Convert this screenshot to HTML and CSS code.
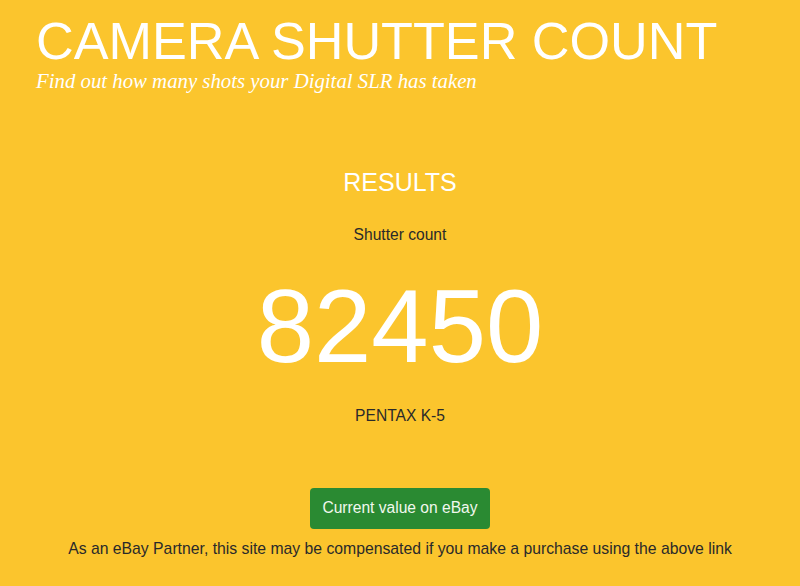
FILE: index.html
```html
<!DOCTYPE html>
<html>
<head>
<meta charset="utf-8">
<link rel="stylesheet" href="styles.css">
</head>
<body>
<header class="header">
  <h1 class="title">CAMERA SHUTTER COUNT</h1>
  <p class="tagline">Find out how many shots your Digital SLR has taken</p>
</header>
<main class="results">
  <h2 class="results-title">RESULTS</h2>
  <p class="label">Shutter count</p>
  <div class="count">82450</div>
  <p class="model">PENTAX K-5</p>
  <a class="ebay-btn" href="#">Current value on eBay</a>
  <p class="disclaimer">As an eBay Partner, this site may be compensated if you make a purchase using the above link</p>
</main>
</body>
</html>
```

FILE: styles.css
```css
html, body {
  margin: 0;
  padding: 0;
}
body {
  background: #fbc52d;
  font-family: "Liberation Sans", Arial, sans-serif;
  color: #2a2a2a;
  height: 586px;
  overflow: hidden;
}
.header {
  padding: 13px 0 0 36px;
}
.title {
  margin: 0;
  font-size: 52.2px;
  font-weight: normal;
  color: #fff;
  line-height: 56px;
}
.tagline {
  margin: 0;
  font-family: "Liberation Serif", "Times New Roman", serif;
  font-style: italic;
  font-size: 20.8px;
  color: #fff;
  line-height: 24px;
}
.results {
  display: flex;
  flex-direction: column;
  align-items: center;
  padding-top: 74px;
}
.results-title {
  margin: 0;
  font-size: 25px;
  font-weight: normal;
  color: #fff;
  line-height: 30px;
}
.label {
  margin: 28px 0 0;
  font-size: 15.6px;
  line-height: 20px;
}
.count {
  margin-top: 27px;
  font-size: 103px;
  line-height: 110px;
  color: #fff;
}
.model {
  margin: 24px 0 0;
  font-size: 15.6px;
  line-height: 20px;
}
.ebay-btn {
  margin-top: 62px;
  display: inline-block;
  background: #2a8a32;
  color: #f1f8ee;
  text-decoration: none;
  font-size: 15.6px;
  line-height: 20px;
  padding: 10px 12px 11px;
  border-radius: 4px;
}
.disclaimer {
  margin: 10px 0 0;
  font-size: 15.75px;
  line-height: 20px;
}
```
